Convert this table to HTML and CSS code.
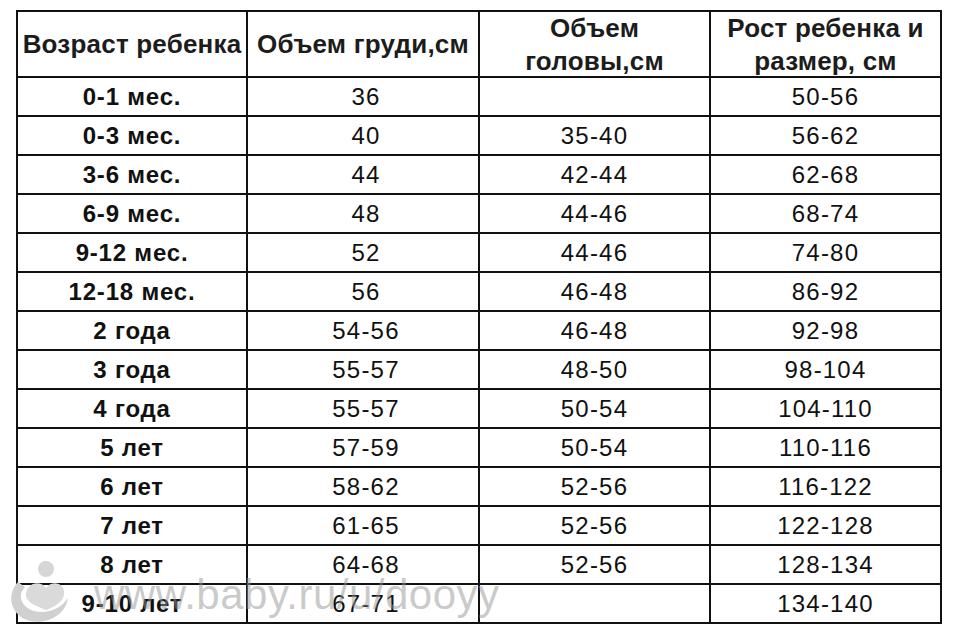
FILE: index.html
```html
<!DOCTYPE html>
<html lang="ru">
<head>
<meta charset="utf-8">
<title>Размеры</title>
<link rel="stylesheet" href="styles.css">
</head>
<body>
<div class="sheet">
  <div class="grid">
    <div class="th">Возраст ребенка</div>
    <div class="th">Объем груди,см</div>
    <div class="th two">Объем<br>головы,см</div>
    <div class="th two">Рост ребенка и<br>размер, см</div>

    <div class="td age">0-1 мес.</div><div class="td c2">36</div><div class="td"></div><div class="td">50-56</div>
    <div class="td age">0-3 мес.</div><div class="td c2">40</div><div class="td">35-40</div><div class="td">56-62</div>
    <div class="td age">3-6 мес.</div><div class="td c2">44</div><div class="td">42-44</div><div class="td">62-68</div>
    <div class="td age">6-9 мес.</div><div class="td c2">48</div><div class="td">44-46</div><div class="td">68-74</div>
    <div class="td age">9-12 мес.</div><div class="td c2">52</div><div class="td">44-46</div><div class="td">74-80</div>
    <div class="td age">12-18 мес.</div><div class="td c2">56</div><div class="td">46-48</div><div class="td">86-92</div>
    <div class="td age">2 года</div><div class="td c2">54-56</div><div class="td">46-48</div><div class="td">92-98</div>
    <div class="td age">3 года</div><div class="td c2">55-57</div><div class="td">48-50</div><div class="td">98-104</div>
    <div class="td age">4 года</div><div class="td c2">55-57</div><div class="td">50-54</div><div class="td">104-110</div>
    <div class="td age">5 лет</div><div class="td c2">57-59</div><div class="td">50-54</div><div class="td">110-116</div>
    <div class="td age">6 лет</div><div class="td c2">58-62</div><div class="td">52-56</div><div class="td">116-122</div>
    <div class="td age">7 лет</div><div class="td c2">61-65</div><div class="td">52-56</div><div class="td">122-128</div>
    <div class="td age">8 лет</div><div class="td c2">64-68</div><div class="td">52-56</div><div class="td">128-134</div>
    <div class="td age">9-10 лет</div><div class="td c2">67-71</div><div class="td"></div><div class="td">134-140</div>
  </div>
</div>
<div class="watermark">
  <svg class="wm-logo" width="70" height="68" viewBox="0 0 70 68">
    <path d="M14 24 C2 36 6 58 26 63 C44 67 62 56 64 40 C56 52 42 56 30 53 C17 49 13 37 21 29 Z" fill="#d0d0d0"/>
    <path d="M22 37 C22 26 35 21 42 30 C49 21 62 26 60 37 C58 46 47 50 42 52 C35 49 22 45 22 37 Z" fill="#dadada"/>
    <circle cx="42" cy="11" r="8" fill="#d6d6d6"/>
  </svg>
  <span class="wm-text">www.baby.ru/u/dooyy</span>
</div>
</body>
</html>
```

FILE: styles.css
```css
html, body {
  margin: 0;
  padding: 0;
  background: #ffffff;
}

body {
  position: relative;
  width: 958px;
  height: 640px;
  overflow: hidden;
  font-family: "Liberation Sans", Arial, sans-serif;
  color: #111111;
}

.sheet {
  padding: 10px 0 0 16px;
}

.grid {
  display: grid;
  grid-template-columns: 230px 232px 231px 231px;
  grid-template-rows: 66px;
  grid-auto-rows: 39px;
  width: 924px;
  border-left: 2px solid #111;
  border-top: 2px solid #111;
}

.th, .td {
  border-right: 2px solid #111;
  border-bottom: 2px solid #111;
  display: flex;
  align-items: center;
  justify-content: center;
  text-align: center;
  white-space: nowrap;
}

.th {
  font-size: 26px;
  font-weight: bold;
  color: #1c1c1c;
  line-height: 33px;
  letter-spacing: 0.2px;
}

.th.two {
  padding-top: 1px;
}

.td {
  font-size: 24px;
  letter-spacing: 1.2px;
  padding-top: 1px;
}

.td.age {
  font-weight: bold;
  letter-spacing: 0.8px;
}

.td.c2 {
  padding-left: 6px;
}

.watermark {
  position: absolute;
  left: 4px;
  top: 558px;
  display: flex;
  align-items: center;
  gap: 20px;
  pointer-events: none;
}

.wm-text {
  font-family: "Liberation Sans", Arial, sans-serif;
  font-size: 42px;
  color: rgba(150, 150, 150, 0.5);
  letter-spacing: 0.5px;
  margin-top: 6px;
}
```
